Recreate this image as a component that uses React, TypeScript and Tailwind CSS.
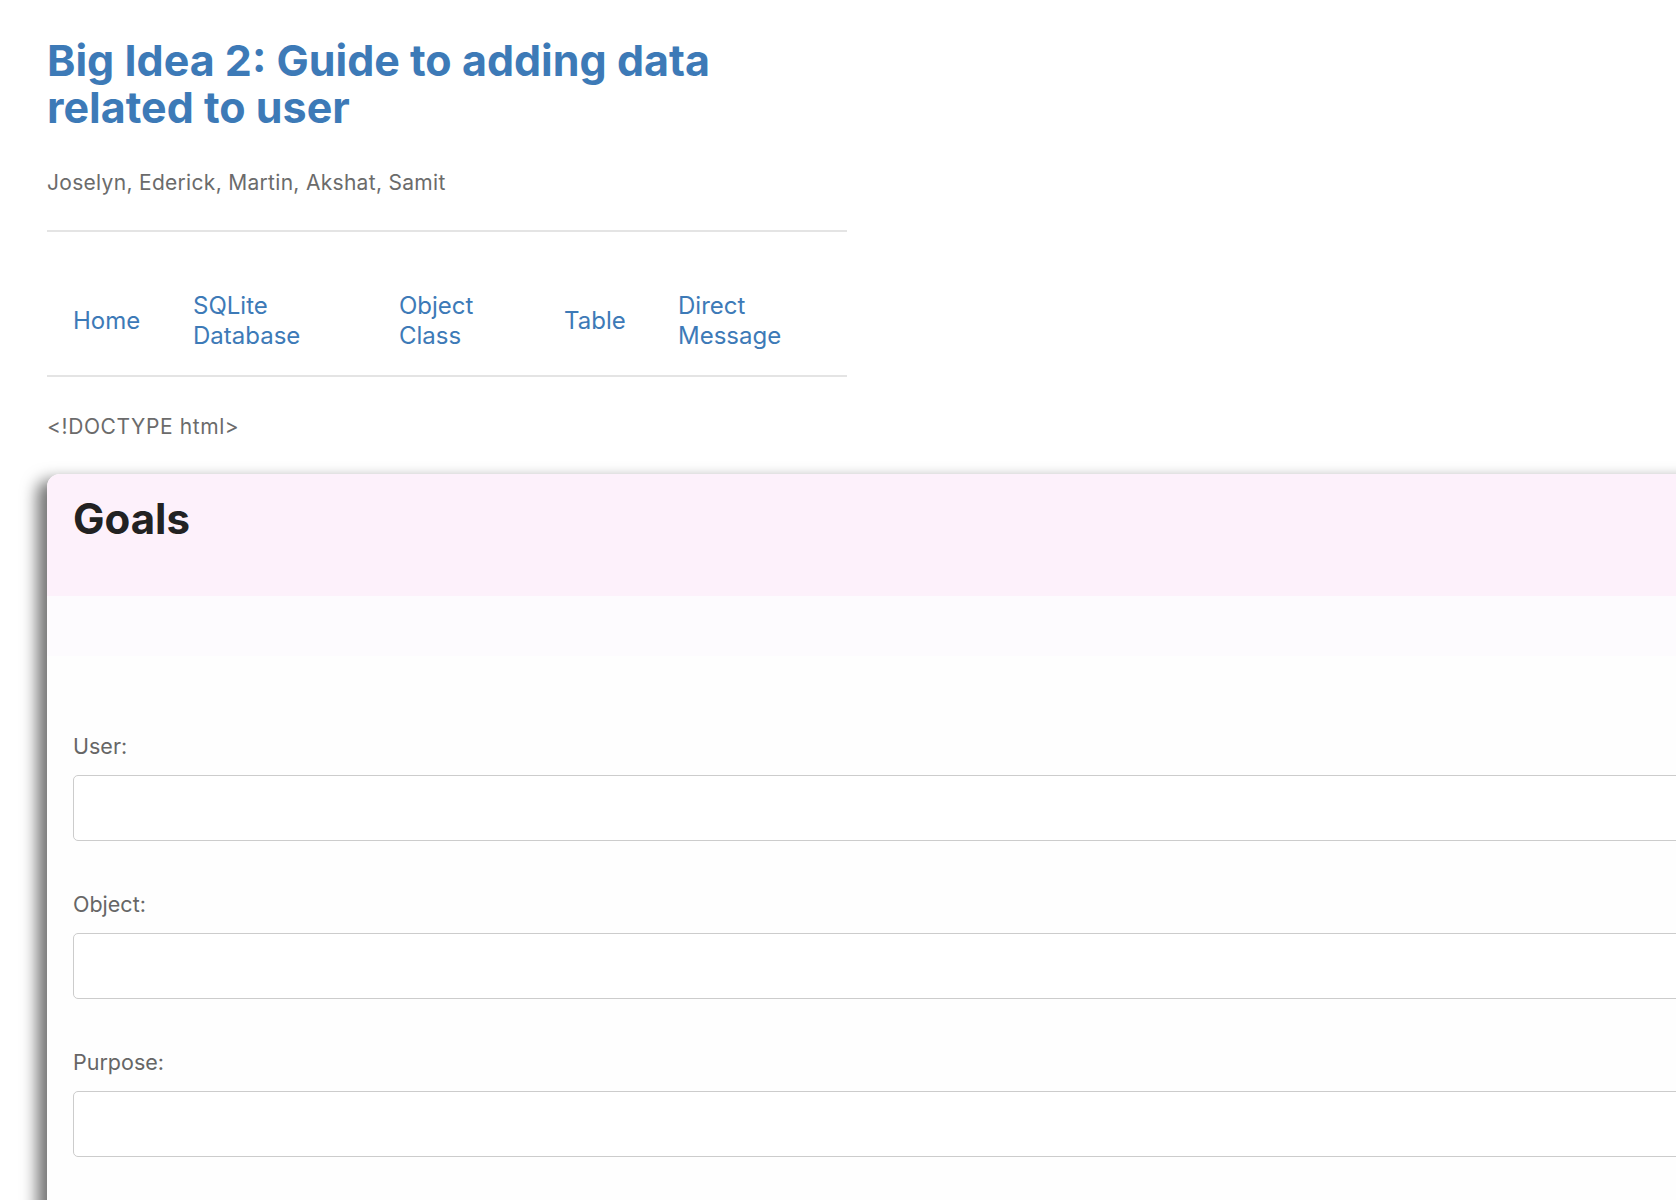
import React from 'react';

const navLinks = [
  { label: ['Home'], width: 'w-[120px]' },
  { label: ['SQLite', 'Database'], width: 'w-[206px]' },
  { label: ['Object', 'Class'], width: 'w-[165px]' },
  { label: ['Table'], width: 'w-[114px]' },
  { label: ['Direct', 'Message'], width: 'w-[120px]' },
];

const fields = ['User:', 'Object:', 'Purpose:'];

export default function App() {
  return (
    <div className="w-[1676px] h-[1200px] overflow-hidden bg-white font-['Inter','Liberation_Sans',sans-serif]">
      <div className="pl-[47px] pt-[37px]">
        <div className="w-[800px]">
          {/* Header */}
          <h1 className="text-[43px] leading-[47px] font-bold text-[#3d7ab7]">
            Big Idea 2: Guide to adding data
            <br />
            related to user
          </h1>
          <p className="mt-[38px] text-[21px] leading-[28px] tracking-[0.3px] text-[#6b6b6b]">
            Joselyn, Ederick, Martin, Akshat, Samit
          </p>
          <div className="mt-[33px] h-[2px] bg-[#e4e4e4]" />

          {/* Nav */}
          <nav className="flex items-center pt-[59px] pb-[24px] pl-[26px] text-[24px] leading-[30px] text-[#3d7ab7]">
            {navLinks.map((link) => (
              <a key={link.label.join(' ')} href="#" className={`${link.width} shrink-0`}>
                {link.label.map((line, i) => (
                  <span key={i} className="block">
                    {line}
                  </span>
                ))}
              </a>
            ))}
          </nav>
          <div className="h-[2px] bg-[#e4e4e4]" />

          <p className="mt-[37px] text-[21px] leading-[26px] tracking-[0.6px] text-[#6b6b6b]">{'<!DOCTYPE html>'}</p>
        </div>

        {/* Goals card */}
        <div className="mt-[34px] w-[1700px] h-[800px] rounded-t-[13px] overflow-hidden bg-[#fefefe] shadow-[-10px_6px_16px_rgba(0,0,0,0.55)]">
          <div className="h-[122px] bg-[#fdf1fb] px-[26px] pt-[20px]">
            <h2 className="text-[42px] leading-[50px] font-bold text-[#222]">Goals</h2>
          </div>
          <div className="h-[60px] bg-[#fdfbfe]" />
          <form className="px-[26px] pt-[76px]">
            {fields.map((label, i) => (
              <div key={label} className={i > 0 ? 'mt-[49px]' : ''}>
                <label className="block text-[21.5px] leading-[28px] text-[#666]">{label}</label>
                <input
                  type="text"
                  className="mt-[15px] block h-[66px] w-full rounded-[5px] border border-[#cccccc] bg-white"
                />
              </div>
            ))}
          </form>
        </div>
      </div>
    </div>
  );
}
